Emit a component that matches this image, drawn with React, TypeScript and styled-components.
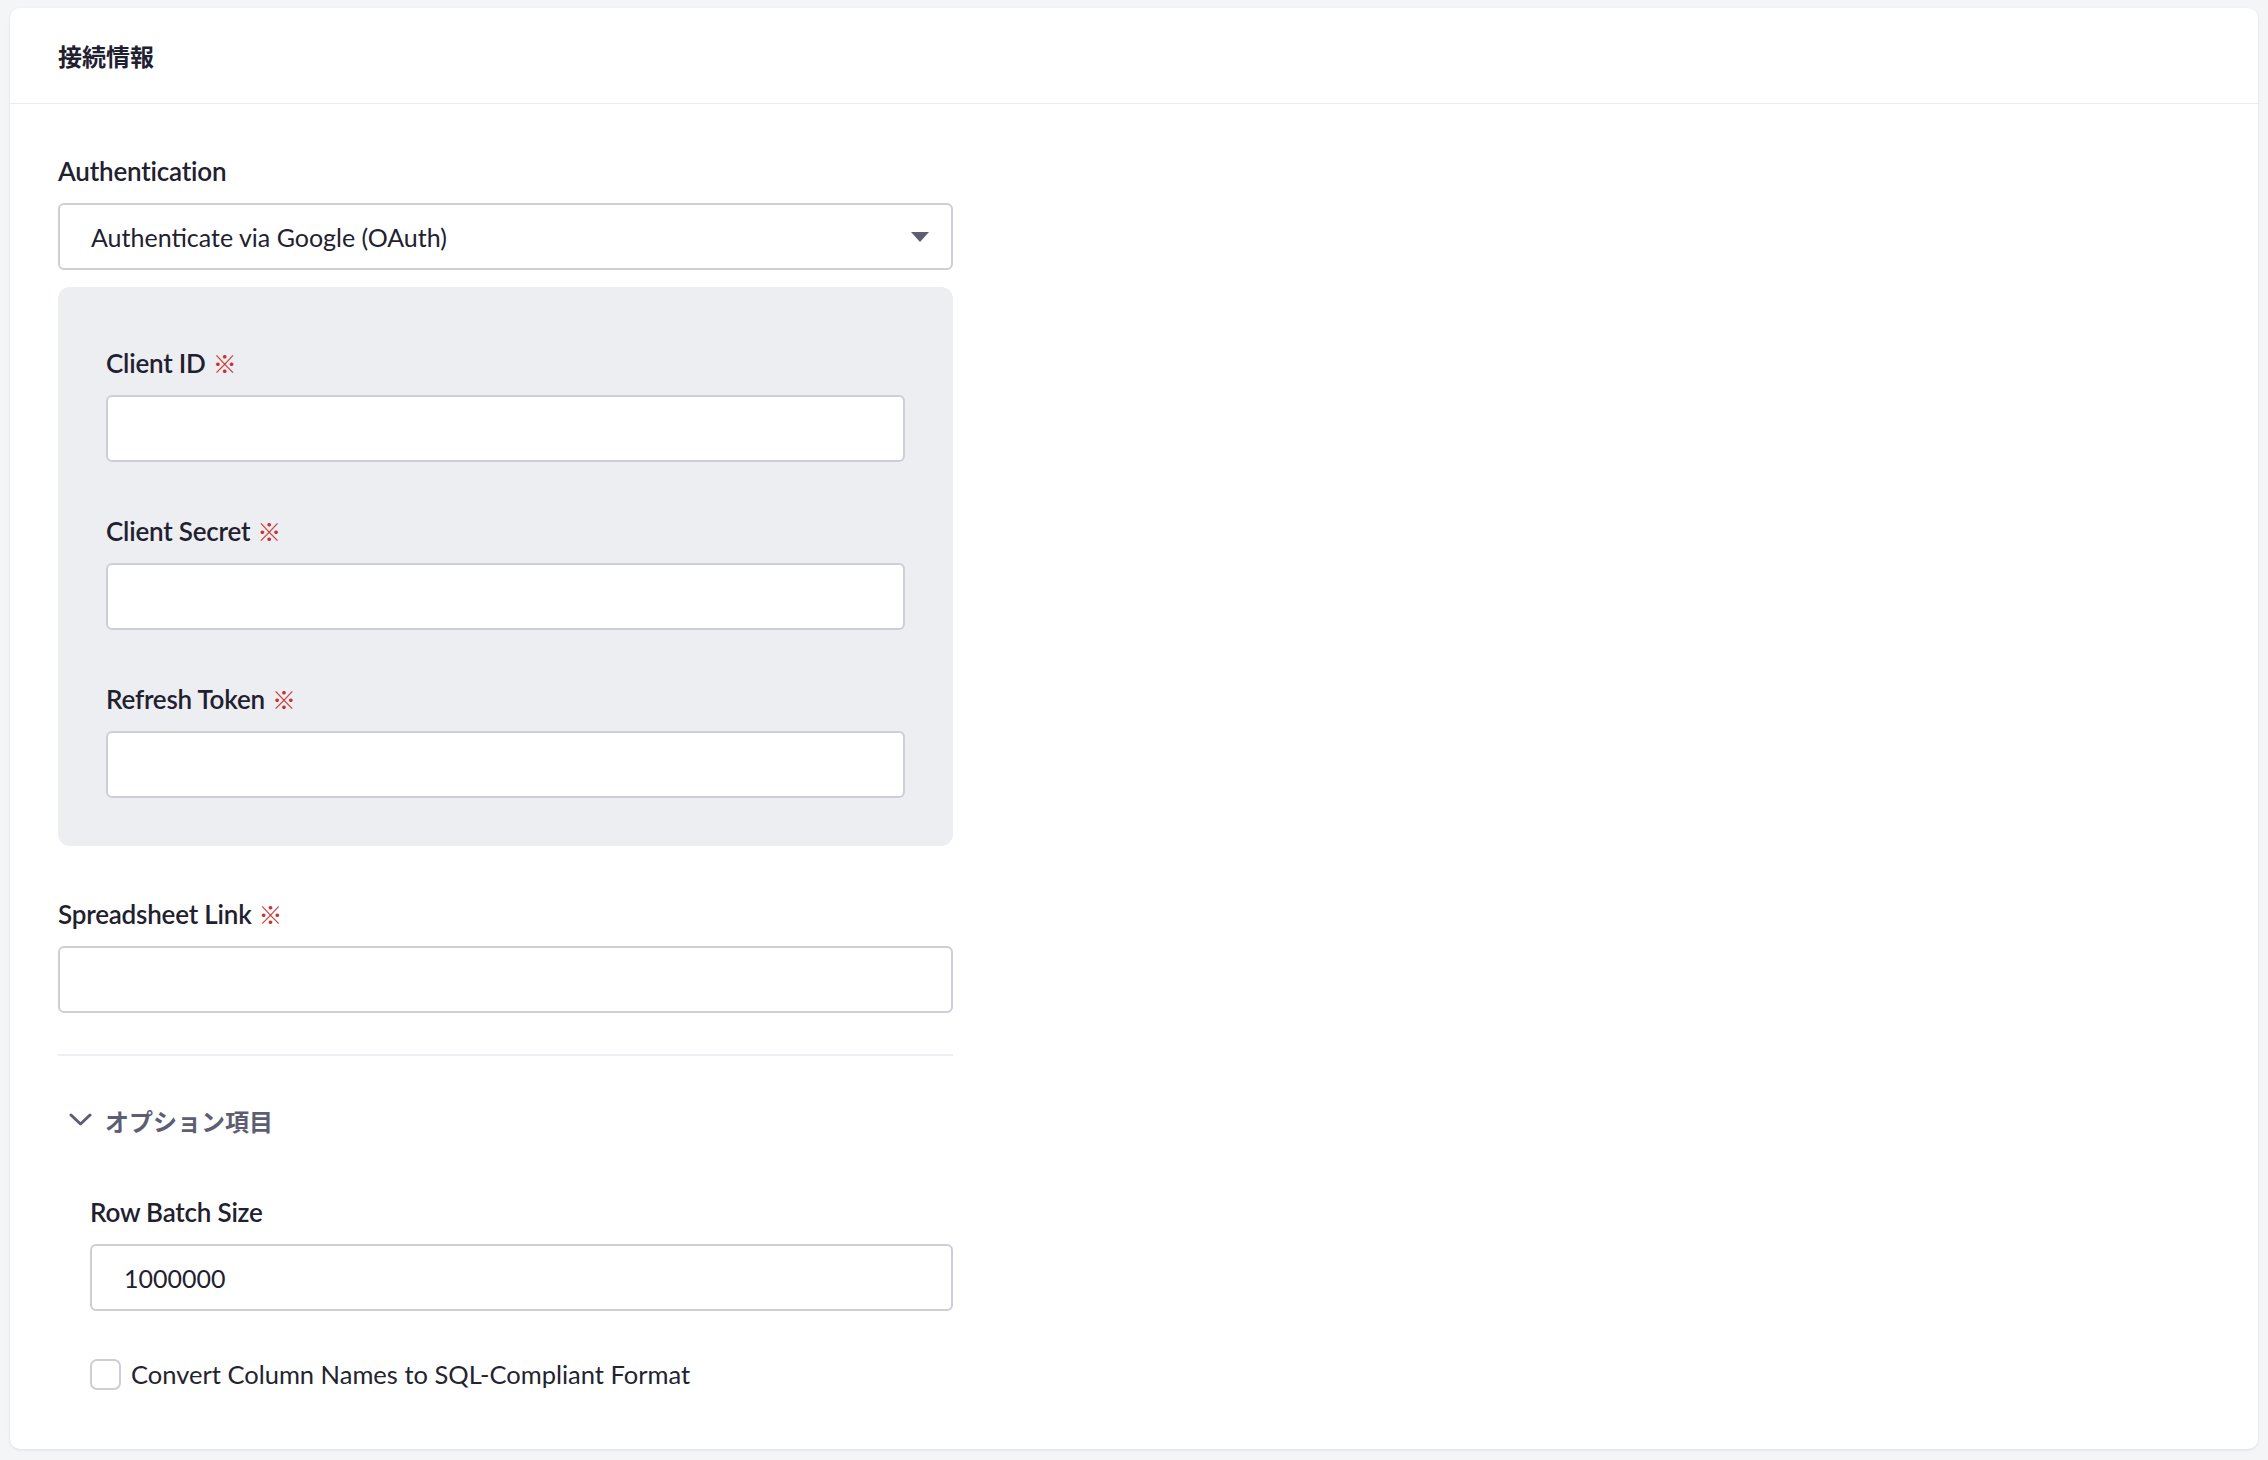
import styled, { createGlobalStyle } from 'styled-components';

const GlobalStyle = createGlobalStyle`
  html, body {
    margin: 0;
    padding: 0;
    background: #f3f5f7;
  }
  body {
    font-family: Lato, "Noto Sans CJK JP", sans-serif;
    color: #1f2130;
  }
  * {
    box-sizing: border-box;
  }
`;

const Page = styled.div`
  padding: 8px 10px 10px 10px;
`;

const Card = styled.section`
  background: #ffffff;
  border-radius: 10px;
  box-shadow: 0 1px 3px rgba(30, 40, 60, 0.1);
`;

const CardHeader = styled.header`
  height: 96px;
  display: flex;
  align-items: center;
  padding: 0 48px;
  border-bottom: 1px solid #ebedf0;
`;

const Heading = styled.h2`
  margin: 0;
  font-family: "Noto Sans CJK JP", sans-serif;
  font-size: 24px;
  font-weight: 700;
  color: #1f2130;
`;

const CardBody = styled.div`
  padding: 49px 48px 57px;
`;

const Form = styled.div`
  width: 895px;
  display: flex;
  flex-direction: column;
`;

const Field = styled.div<{ $top?: number }>`
  display: flex;
  flex-direction: column;
  margin-top: ${(p) => p.$top ?? 0}px;
`;

const Label = styled.label`
  font-size: 26px;
  line-height: 36px;
  font-weight: 600;
  letter-spacing: -0.2px;
  color: #1f2130;
  margin-bottom: 14px;
  display: flex;
  align-items: center;
`;

const Required = styled.span`
  font-family: "Noto Sans CJK JP", sans-serif;
  font-size: 24px;
  font-weight: 400;
  color: #cc2f2f;
  margin-left: 7px;
`;

const Input = styled.input`
  height: 67px;
  width: 100%;
  border: 2px solid #cdced6;
  border-radius: 6px;
  background: #ffffff;
  padding: 0 32px;
  font-family: Lato, sans-serif;
  font-size: 25px;
  color: #1f2130;
  outline: none;
`;

const SelectBox = styled.div`
  height: 67px;
  border: 2px solid #cdced6;
  border-radius: 6px;
  background: #ffffff;
  display: flex;
  align-items: center;
  justify-content: space-between;
  padding: 0 22px 0 31px;
  font-size: 25px;
  color: #1f2130;
`;

const Caret = styled.span`
  width: 0;
  height: 0;
  border-left: 9px solid transparent;
  border-right: 9px solid transparent;
  border-top: 10px solid #5d5f73;
`;

const SubPanel = styled.div`
  margin-top: 17px;
  background: #edeef1;
  border-radius: 12px;
  padding: 58px 48px 48px;
  display: flex;
  flex-direction: column;
  gap: 51px;
`;

const Divider = styled.hr`
  margin: 41px 0 0;
  border: none;
  border-top: 2px solid #eeeff2;
`;

const Toggle = styled.button`
  margin-top: 46px;
  display: flex;
  align-items: center;
  gap: 13px;
  padding: 0 0 0 11px;
  background: none;
  border: none;
  height: 36px;
  font-family: "Noto Sans CJK JP", sans-serif;
  font-size: 24px;
  font-weight: 700;
  color: #5c5f73;
  cursor: pointer;
`;

const OptionBody = styled.div`
  padding-left: 32px;
  display: flex;
  flex-direction: column;
`;

const CheckRow = styled.label`
  margin-top: 45px;
  display: flex;
  align-items: center;
  gap: 10px;
  height: 36px;
  font-size: 25.5px;
  color: #23242f;
`;

const CheckBox = styled.span`
  width: 31px;
  height: 31px;
  border: 2px solid #cdced6;
  border-radius: 7px;
  background: #ffffff;
`;

const Chevron = () => (
  <svg width="23" height="14" viewBox="0 0 23 14" fill="none">
    <polyline
      points="2,2 11.5,11 21,2"
      stroke="#5c5f73"
      strokeWidth="3"
      strokeLinecap="round"
      strokeLinejoin="round"
    />
  </svg>
);

const oauthFields = ['Client ID', 'Client Secret', 'Refresh Token'];

export default function App() {
  return (
    <>
      <GlobalStyle />
      <Page>
        <Card>
          <CardHeader>
            <Heading>接続情報</Heading>
          </CardHeader>
          <CardBody>
            <Form>
              <Field>
                <Label>Authentication</Label>
                <SelectBox>
                  <span>Authenticate via Google (OAuth)</span>
                  <Caret />
                </SelectBox>
              </Field>
              <SubPanel>
                {oauthFields.map((name) => (
                  <Field key={name}>
                    <Label>
                      {name}
                      <Required>※</Required>
                    </Label>
                    <Input />
                  </Field>
                ))}
              </SubPanel>
              <Field $top={50}>
                <Label>
                  Spreadsheet Link
                  <Required>※</Required>
                </Label>
                <Input />
              </Field>
              <Divider />
              <Toggle>
                <Chevron />
                オプション項目
              </Toggle>
              <OptionBody>
                <Field $top={56}>
                  <Label>Row Batch Size</Label>
                  <Input defaultValue="1000000" />
                </Field>
                <CheckRow>
                  <CheckBox />
                  Convert Column Names to SQL-Compliant Format
                </CheckRow>
              </OptionBody>
            </Form>
          </CardBody>
        </Card>
      </Page>
    </>
  );
}
